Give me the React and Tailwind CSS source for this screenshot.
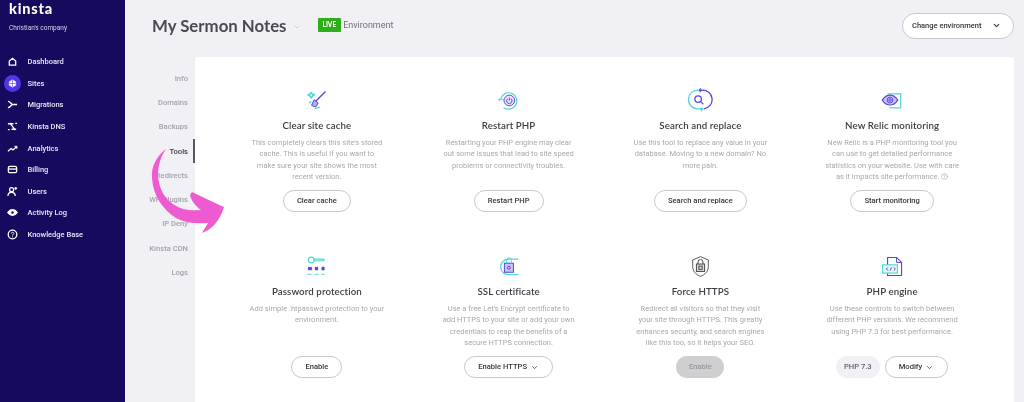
import { ChevronDown, CircleHelp } from 'lucide-react';

const NAV = ['Dashboard', 'Sites', 'Migrations', 'Kinsta DNS', 'Analytics', 'Billing', 'Users', 'Activity Log', 'Knowledge Base'];
const TABS = ['Info', 'Domains', 'Backups', 'Tools', 'Redirects', 'WP Plugins', 'IP Deny', 'Kinsta CDN', 'Logs'];

function NavIcon({ name }) {
  const common = { width: 11, height: 11, viewBox: '0 0 12 12', fill: 'none', stroke: 'white', strokeWidth: 1.4 };
  switch (name) {
    case 'Dashboard':
      return <svg {...common}><path d="M2.5 10V5.5L6 2.5l3.5 3V10z" /></svg>;
    case 'Sites':
      return <svg {...common}><path d="M6 2l3.5 2v4L6 10 2.5 8V4z" fill="white" strokeWidth="0.6" /><path d="M2.5 6h7M6 2v8" stroke="#4f35e6" strokeWidth="0.6" /></svg>;
    case 'Migrations':
      return <svg {...common}><path d="M1 2.5c3 0 3 3.5 5.5 3.5H11M1 9.5C4 9.5 4 6 6.5 6" /></svg>;
    case 'Kinsta DNS':
      return <svg {...common}><path d="M1 3h6M10 9H5M3 2l6 8M9 2.5h2M1 9.5h2" /></svg>;
    case 'Analytics':
      return <svg {...common}><path d="M1 9l3.5-3 2 1.500L10.500 4" /><path d="M8 3.500h3v3" fill="white" strokeWidth="0.6" /></svg>;
    case 'Billing':
      return <svg {...common}><rect x="1.5" y="2.5" width="9" height="7" rx="1.5" /><path d="M1.5 5.5h9" /></svg>;
    case 'Users':
      return <svg {...common}><circle cx="5" cy="4" r="2.2" /><path d="M1 11c0-3 1.500-4 4-4s4 1 4 4M9.500 1v3M8 2.500h3" /></svg>;
    case 'Activity Log':
      return <svg {...common}><path d="M.8 6C2.500 3.500 4 2.800 6 2.800S9.500 3.500 11.200 6C9.500 8.500 8 9.200 6 9.200S2.500 8.500.8 6z" fill="white" /><circle cx="6" cy="6" r="1.3" fill="#160a5f" stroke="none" /></svg>;
    default:
      return <svg {...common}><circle cx="6" cy="6" r="4.7" /><path d="M4.600 4.800C4.700 3.200 7.500 3.200 7.400 4.900 7.300 6 6 5.900 6 7.200M6 8v1" strokeWidth="1" /></svg>;
  }
}

function ToolIcon({ name }) {
  const teal = '#4fd8d6';
  const violet = '#5b45e0';
  const props = { width: 23, height: 23, viewBox: '0 0 28 28', fill: 'none', strokeWidth: 1.2 };
  switch (name) {
    case 'cache':
      return (
        <svg {...props}>
          <path d="M3 7c3 0 4-1 4.500-3 .5 2 2 3 4.500 3-2.500.5-4 2-4.500 4.500C7 9 5.500 7.500 3 7zM5 17c1.500-.2 2-1 2.300-2" stroke={teal} strokeWidth="1.800" />
          <path d="M25 3L13 15" stroke={violet} strokeWidth="1.600" />
          <path d="M11 13l5 4-3 5-5-2z" fill={violet} fillOpacity="0.45" stroke={violet} />
          <path d="M12 24l6-2" stroke={teal} strokeWidth="1.500" />
        </svg>
      );
    case 'php':
      return (
        <svg {...props}>
          <path d="M4.500 12A10 10 0 1 1 8 22.500" stroke={teal} strokeWidth="1.500" />
          <path d="M2 13h6M4 11l-2 2 2 2" stroke={teal} />
          <circle cx="15" cy="14" r="6.500" fill="#e6e2fb" stroke={violet} />
          <path d="M15 10.500V14M12.800 12a3.300 3.300 0 1 0 4.400 0" stroke={violet} />
        </svg>
      );
    case 'search':
      return (
        <svg {...props} width={26} height={26}>
          <path d="M12 3.500a10 10 0 0 0-1 20h6" stroke={teal} strokeWidth="1.400" />
          <path d="M14 24l3 0M15 22l2 2-2 2" stroke={teal} />
          <path d="M13 3.500h3a10 10 0 0 1 2 20" stroke={violet} strokeWidth="1.400" />
          <path d="M15 1.500l-2 2 2 2" stroke={violet} />
          <circle cx="12" cy="13" r="3.500" stroke={violet} strokeWidth="1.400" />
          <path d="M14.500 15.500l3 3" stroke={violet} strokeWidth="1.400" />
        </svg>
      );
    case 'relic':
      return (
        <svg {...props}>
          <path d="M8 5h16v17H10" stroke={teal} strokeWidth="1.500" transform="translate(0 1)" />
          <path d="M1.500 13.500C5 8.500 8 7.500 11 7.500s6 1 9.500 6c-3.500 5-6.500 6-9.500 6s-6-1-9.500-6z" fill="#c9c3f6" stroke={violet} strokeWidth="1.400" />
          <circle cx="11" cy="13.500" r="3.500" stroke={violet} />
          <circle cx="11" cy="13.500" r="1.500" stroke={violet} />
        </svg>
      );
    case 'password':
      return (
        <svg {...props}>
          <circle cx="7.500" cy="6" r="3.500" stroke={teal} strokeWidth="1.500" />
          <path d="M11 5h12v2h-12" stroke={teal} strokeWidth="1.400" />
          <path d="M4 14.500l4 4M8 14.500l-4 4M3.500 16.500h5M6 14.500v4M14 14.500v4M12 16.500h4M12.500 14.500l3 4M15.500 14.500l-3 4M22 14.500v4M20 16.500h4M20.500 14.500l3 4M23.500 14.500l-3 4" stroke={violet} strokeWidth="1.400" />
          <path d="M3 23.500h5M11.500 23.500h5M20 23.500h4" stroke={teal} strokeWidth="1.300" />
        </svg>
      );
    case 'ssl':
      return (
        <svg {...props}>
          <path d="M26 5h-12a9.500 9.500 0 0 0 0 19h12" stroke={teal} strokeWidth="1.600" />
          <rect x="9" y="10" width="11" height="11" fill="#c9c3f6" stroke={violet} />
          <circle cx="14.500" cy="15.500" r="1.800" stroke={violet} />
          <path d="M11.500 10V6.500a3 3 0 0 1 6 0V10" stroke={teal} />
        </svg>
      );
    case 'https':
      return (
        <svg {...props}>
          <path d="M14 2l9.500 4v8c0 6-4 10-9.500 12-5.500-2-9.500-6-9.500-12V6z" stroke="#555" />
          <rect x="9" y="11" width="10" height="9" fill="#ddd" stroke="#444" />
          <path d="M11 11V8.500a3 3 0 0 1 6 0V11" stroke="#444" />
          <rect x="12" y="13.500" width="4" height="4" stroke="#444" />
        </svg>
      );
    default:
      return (
        <svg {...props}>
          <path d="M8 13V3h11l6 6v16H8v-4" stroke={violet} strokeWidth="1.400" />
          <path d="M19 3v6h6" stroke={violet} />
          <rect x="2" y="12" width="18" height="10" fill="#e4f8f8" stroke={teal} strokeWidth="1.400" />
          <path d="M8.500 15l-2 2 2 2M15.500 15l2 2-2 2M12.800 15l-1.600 4" stroke={violet} />
        </svg>
      );
  }
}

function OutlineButton({ children }) {
  return (
    <button type="button" className="inline-flex h-[22px] items-center justify-center gap-[3px] rounded-full border border-[#c9c9cf] bg-white px-[13px] font-['Roboto',sans-serif] text-[7.600px] font-medium text-[#35353d]">
      {children}
    </button>
  );
}

function Tool({ icon, title, children, action }) {
  return (
    <div className="flex h-[126px] flex-col items-center text-center">
      <div className="flex h-[28px] items-center justify-center">
        <ToolIcon name={icon} />
      </div>
      <h3 className="mt-[3px] h-[16px] font-['Lato',sans-serif] text-[9.700px] leading-[16px] font-semibold tracking-[0.1px] text-[#3c3c44]">{title}</h3>
      <p className="mt-[4px] h-[46px] w-[136px] font-['Roboto',sans-serif] text-[7.500px] leading-[11.400px] text-[#a8a8af]">{children}</p>
      <div className="mt-auto flex gap-[5px]">{action}</div>
    </div>
  );
}

export default function App() {
  return (
    <div className="relative flex h-[402px] w-[1024px] overflow-hidden bg-[#f0f0f5] blur-[0.5px]">
      <aside className="w-[125px] shrink-0 bg-[#160a5f] text-white">
        <div className="pt-[1px] pl-[9px] font-['Lato',sans-serif] text-[14.500px] leading-[16px] font-black tracking-[0.8px]">kinsta</div>
        <div className="mt-[6px] pl-[9px] font-['Roboto',sans-serif] text-[6.500px] leading-[10px] text-[#d8d6ea]">Christian's company</div>
        <nav className="mt-[18px]">
          {NAV.map((item) => (
            <div key={item} className="flex h-[21.600px] items-center">
              <span className={`ml-[3.500px] flex h-[17px] w-[17px] items-center justify-center rounded-full ${item === 'Sites' ? 'bg-[#4f35e6]' : ''}`}>
                <NavIcon name={item} />
              </span>
              <span className="ml-[7px] font-['Roboto',sans-serif] text-[7.500px] font-medium text-[#e8e7f3]">{item}</span>
            </div>
          ))}
        </nav>
      </aside>

      <main className="flex min-w-0 flex-1 flex-col">
        <header className="flex h-[57px] shrink-0 items-center pr-[10px] pl-[27px]">
          <h1 className="pb-[5px] font-['Lato',sans-serif] text-[16.800px] font-bold text-[#4a4a52]">My Sermon Notes</h1>
          <ChevronDown size={8} className="mb-[4px] ml-[6px] text-[#bdbdc4]" />
          <span className="mb-[7px] ml-[17px] rounded-[1px] bg-[#2fae1c] px-[5px] py-[2px] font-['Lato',sans-serif] text-[6.500px] leading-[10px] font-black text-white">LIVE</span>
          <span className="mb-[6px] ml-[2px] font-['Roboto',sans-serif] text-[9px] text-[#6f6f78]">Environment</span>
          <button type="button" className="mb-[6px] ml-auto flex h-[26px] w-[112px] items-center justify-between rounded-full border border-[#c9c9cf] bg-white pr-[12px] pl-[9px] font-['Roboto',sans-serif] text-[7.500px] font-medium text-[#35353d]">
            Change environment
            <ChevronDown size={9} strokeWidth={3} />
          </button>
        </header>

        <div className="flex min-h-0 flex-1 pr-[10px]">
          <nav className="w-[70px] shrink-0 pt-[9px]">
            {TABS.map((tab) => (
              <div
                key={tab}
                className={`flex h-[24.250px] items-center justify-end border-r-2 pt-[1px] pr-[5px] font-['Roboto',sans-serif] text-[7.600px] font-medium whitespace-nowrap ${tab === 'Tools' ? 'border-[#5a5a62] font-bold text-[#3c3c44]' : 'border-transparent text-[#a3a3aa]'}`}
              >
                {tab}
              </div>
            ))}
          </nav>

          <section className="flex-1 rounded-t-[3px] bg-white px-[26px] pt-[29px]">
            <div className="grid grid-cols-4 gap-y-[40px]">
              <Tool icon="cache" title="Clear site cache" action={<OutlineButton>Clear cache</OutlineButton>}>
                This completely clears this site's stored cache. This is useful if you want to<br />make sure your site shows the most recent version.
              </Tool>
              <Tool icon="php" title="Restart PHP" action={<OutlineButton>Restart PHP</OutlineButton>}>
                Restarting your PHP engine may clear out some issues that lead to site speed problems or connectivity troubles.
              </Tool>
              <Tool icon="search" title="Search and replace" action={<OutlineButton>Search and replace</OutlineButton>}>
                Use this tool to replace any value in your database. Moving to a new domain? No more pain.
              </Tool>
              <Tool icon="relic" title="New Relic monitoring" action={<OutlineButton>Start monitoring</OutlineButton>}>
                New Relic is a PHP monitoring tool you can use to get detailed performance statistics on your website. Use with care as it impacts site performance. <CircleHelp size={7} className="inline align-[-1px]" />
              </Tool>
              <Tool icon="password" title="Password protection" action={<OutlineButton>Enable</OutlineButton>}>
                Add simple .htpasswd protection to your environment.
              </Tool>
              <Tool icon="ssl" title="SSL certificate" action={<OutlineButton>Enable HTTPS <ChevronDown size={9} /></OutlineButton>}>
                Use a free Let's Encrypt certificate to add HTTPS to your site or add your own credentials to reap the benefits of a secure HTTPS connection.
              </Tool>
              <Tool
                icon="https"
                title="Force HTTPS"
                action={
                  <button type="button" className="h-[22px] w-[48px] rounded-full bg-[#cfcfd2] font-['Roboto',sans-serif] text-[7.600px] font-medium text-[#97979c]">
                    Enable
                  </button>
                }
              >
                Redirect all visitors so that they visit<br />your site through HTTPS. This greatly enhances security, and search engines like this too, so it helps your SEO.
              </Tool>
              <Tool
                icon="engine"
                title="PHP engine"
                action={
                  <>
                    <span className="flex h-[22px] items-center rounded-full bg-[#f0f0f5] px-[8px] font-['Roboto',sans-serif] text-[7.600px] font-medium text-[#5f5f68]">PHP 7.3</span>
                    <OutlineButton>Modify <ChevronDown size={9} /></OutlineButton>
                  </>
                }
              >
                Use these controls to switch between different PHP versions. We recommend using PHP 7.3 for best performance.
              </Tool>
            </div>
          </section>
        </div>
      </main>

      <svg className="absolute top-[140px] left-[145px]" width="90" height="100" viewBox="0 0 90 100" fill="#ee5bd0">
        <path d="M21 9C11 17 6 27 7 38c1 17 10 31 24 40 10 5 20 6 32 5l-6 10c9-3 18-12 22-26-9-4-21-10-32-15l-2 3c1 5 6 12 11 15-10 1-20 0-28-6C18 57 14 47 13 36 13 26 15 18 21 9z" />
      </svg>
    </div>
  );
}
